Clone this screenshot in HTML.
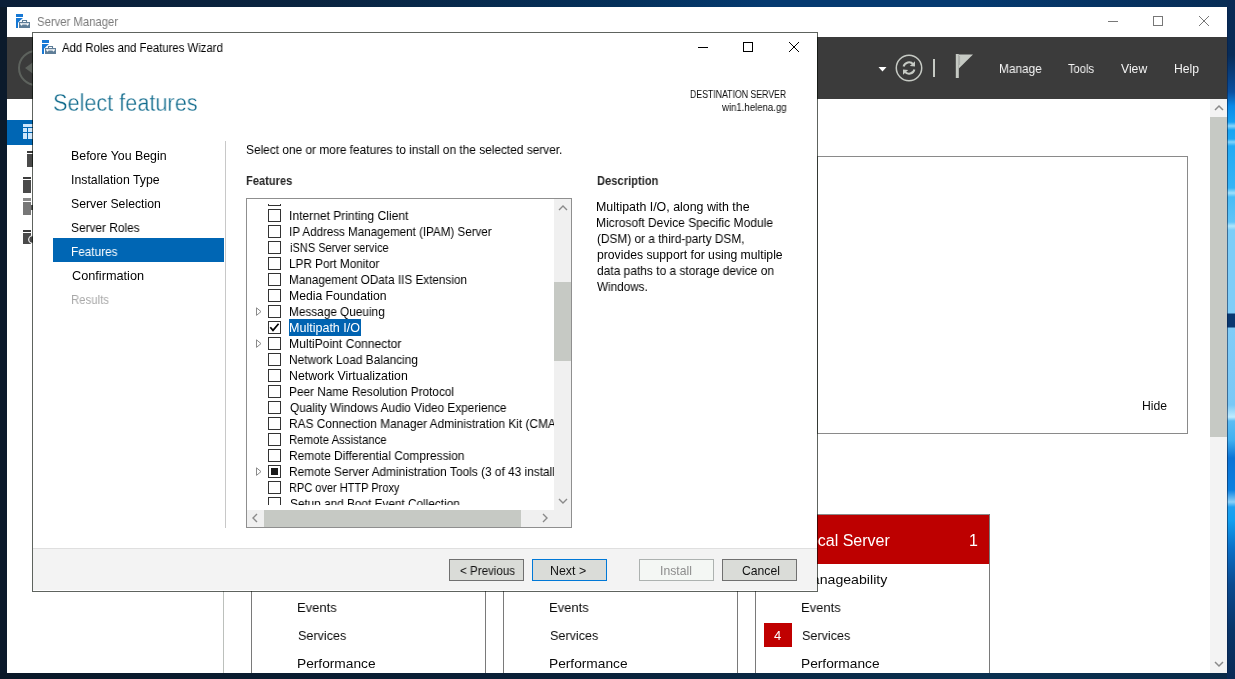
<!DOCTYPE html>
<html><head><meta charset="utf-8"><title>Server Manager - Add Roles and Features Wizard</title>
<style>
html,body{margin:0;padding:0;width:1235px;height:679px;overflow:hidden;background:#0b1a2c}
body{position:relative;font-family:"Liberation Sans",sans-serif}
.r{position:absolute}
.t{position:absolute;white-space:pre;transform-origin:0 0;will-change:transform}
</style></head><body>
<div class="r" style="left:0;top:0;width:1235px;height:679px;background:linear-gradient(90deg,#0b1a2b 0%,#0a1f35 40%,#082a4c 75%,#073058 100%)"></div>
<div class="r" style="left:0;top:0;width:1235px;height:7px;background:linear-gradient(90deg,#0a1e38 0%,#0a2440 25%,#04305a 50%,#053a70 62%,#053a70 78%,#072c55 100%)"></div>
<div class="r" style="left:0;top:673px;width:1235px;height:6px;background:linear-gradient(90deg,#0a1828 0%,#0a2038 45%,#0a3050 80%,#0a2a48 100%)"></div>
<div class="r" style="left:1227px;top:0;width:8px;height:679px;background:linear-gradient(180deg,#082a55 0px,#082c58 55px,#0a50a0 92px,#0a8ae8 106px,#14a0f2 122px,#8ad6fc 126px,#18a4f2 130px,#20a8f4 139px,#80d4fc 142px,#22aaf4 146px,#36b4f6 188px,#a0e0fc 193px,#48bcf6 197px,#60c4f8 222px,#b0e6fc 226px,#7ccdf8 230px,#80cdf8 313px,#0a3870 314px,#0a3870 327px,#80ccf8 328px,#7ac8f6 405px,#c0ecff 417px,#5cbcf4 421px,#40b0f0 440px,#0a74d6 458px,#0a80e0 490px,#8ad0f8 502px,#20a0f0 507px,#12a0f0 520px,#0a70c8 548px,#0a4a90 585px,#083468 630px,#0a2a55 679px)"></div>
<div class="r" style="left:1227px;top:7px;width:1px;height:666px;background:rgba(5,30,70,0.55)"></div>
<div class="r" style="left:7px;top:7px;width:1220px;height:666px;background:#ffffff;"></div>
<svg class="r" style="left:16px;top:14px" width="14" height="14" viewBox="0 0 14 14"><rect x="0" y="0" width="7" height="3" fill="#1778d4"/><rect x="0" y="4" width="2" height="10" fill="#1778d4"/><path d="M2 4 H7 Q4.5 6 2 8.8Z" fill="#1778d4"/><rect x="3" y="8" width="11" height="6" fill="#5f7e98"/><path d="M6.5 8.2 V6.5 H10.5 V8.2" fill="none" stroke="#5f7e98" stroke-width="1.1"/><path d="M4 9.2 H13 V10.4 H12.2 L11.8 11.5 H11 L10.6 10.4 H6.4 L6 11.5 H5.2 L4.8 10.4 H4Z" fill="#ffffff"/></svg>
<div class="t" style="left:37.00px;top:15.67px;font-size:12.2px;line-height:12.2px;color:#7a7a7a;transform:scaleX(0.9276);">Server Manager</div>
<div class="r" style="left:1108px;top:21px;width:10px;height:1px;background:#777777;"></div>
<div class="r" style="left:1153px;top:16px;width:10px;height:10px;background:transparent;box-sizing:border-box;border:1px solid #777777"></div>
<svg class="r" style="left:1199px;top:16px" width="10" height="10" viewBox="0 0 10 10"><path d="M0 0L10 10M10 0L0 10" stroke="#777777" stroke-width="1"/></svg>
<div class="r" style="left:7px;top:37px;width:1220px;height:62px;background:#3b3b3b;"></div>
<svg class="r" style="left:7px;top:40px" width="40" height="56" viewBox="0 0 40 56"><circle cx="29" cy="28" r="17" fill="none" stroke="#5d625d" stroke-width="2"/><path d="M18 28 L27 21.5 V34.5Z" fill="#5d625d"/></svg>
<svg class="r" style="left:878px;top:66px" width="9" height="6" viewBox="0 0 9 6"><path d="M0.5 1 H8.5 L4.5 5.5Z" fill="#ffffff"/></svg>
<svg class="r" style="left:894px;top:53px" width="30" height="30" viewBox="0 0 30 30"><circle cx="15" cy="15" r="12.7" fill="none" stroke="#c6cac4" stroke-width="1.5"/><path d="M9.6 13.6 A5.6 5.6 0 0 1 19.3 11.3" fill="none" stroke="#c6cac4" stroke-width="2"/><path d="M21 8.3 L21 13.6 L15.8 12.9 Z" fill="#c6cac4"/><path d="M20.4 16.4 A5.6 5.6 0 0 1 10.7 18.7" fill="none" stroke="#c6cac4" stroke-width="2"/><path d="M9 21.7 L9 16.4 L14.2 17.1 Z" fill="#c6cac4"/></svg>
<div class="r" style="left:933px;top:59px;width:2px;height:18px;background:#c6cac4;"></div>
<svg class="r" style="left:954px;top:53px" width="20" height="26" viewBox="0 0 20 26"><rect x="1.8" y="1" width="3" height="24" fill="#c6cac4"/><path d="M4.8 1.5 H19 L4.8 15.5Z" fill="#c6cac4"/><path d="M5.6 3 V12" stroke="#a9ada8" stroke-width="1"/></svg>
<div class="t" style="left:999.03px;top:62.67px;font-size:12.2px;line-height:12.2px;color:#f4f4f4;transform:scaleX(0.9708);">Manage</div>
<div class="t" style="left:1068.00px;top:62.67px;font-size:12.2px;line-height:12.2px;color:#f4f4f4;transform:scaleX(0.9169);">Tools</div>
<div class="t" style="left:1121.00px;top:62.67px;font-size:12.2px;line-height:12.2px;color:#f4f4f4;transform:scaleX(0.9851);">View</div>
<div class="t" style="left:1174.01px;top:62.67px;font-size:12.2px;line-height:12.2px;color:#f4f4f4;transform:scaleX(0.9882);">Help</div>
<div class="r" style="left:7px;top:120px;width:40px;height:25px;background:#0066b4;"></div>
<svg class="r" style="left:23px;top:124px" width="10" height="16" viewBox="0 0 10 16"><rect x="0" y="0" width="10" height="3" fill="#cfe6fb"/><rect x="0" y="4" width="4" height="4" fill="#cfe6fb"/><rect x="5" y="4" width="5" height="4" fill="#cfe6fb"/><rect x="0" y="9" width="4" height="6" fill="#cfe6fb"/><rect x="5" y="9" width="5" height="6" fill="#cfe6fb"/></svg>
<div class="r" style="left:27px;top:151px;width:6px;height:2px;background:#3c3c3c;"></div>
<div class="r" style="left:27px;top:154px;width:6px;height:13px;background:#4a4a4a;"></div>
<div class="r" style="left:23px;top:177px;width:8px;height:2px;background:#3c3c3c;"></div>
<div class="r" style="left:23px;top:180px;width:8px;height:13px;background:#4a4a4a;"></div>
<div class="r" style="left:23px;top:198px;width:8px;height:3px;background:#8a8a8a;"></div>
<div class="r" style="left:23px;top:202px;width:8px;height:13px;background:#777777;"></div>
<div class="r" style="left:31px;top:205px;width:2px;height:5px;background:#555555;"></div>
<div class="r" style="left:23px;top:230px;width:8px;height:2px;background:#3c3c3c;"></div>
<div class="r" style="left:23px;top:233px;width:8px;height:11px;background:#4a4a4a;"></div>
<svg class="r" style="left:26px;top:234px" width="8" height="11" viewBox="0 0 8 11"><circle cx="6.5" cy="5.5" r="3.8" fill="#4a4a4a" stroke="#ffffff" stroke-width="1.1"/></svg>
<div class="r" style="left:817px;top:156px;width:371px;height:278px;background:transparent;box-sizing:border-box;border:1px solid #8a8a8a"></div>
<div class="t" style="left:1142.01px;top:399.67px;font-size:12.2px;line-height:12.2px;color:#0a0a0a;transform:scaleX(0.9882);">Hide</div>
<div class="r" style="left:1210px;top:99px;width:17px;height:574px;background:#f3f3f3;"></div>
<div class="r" style="left:1210px;top:117px;width:17px;height:320px;background:#c6c9c4;"></div>
<svg class="r" style="left:1214px;top:104px" width="10" height="8" viewBox="0 0 10 8"><path d="M1 6 L5 2 L9 6" fill="none" stroke="#8a8a8a" stroke-width="1.5"/></svg>
<svg class="r" style="left:1214px;top:660px" width="10" height="8" viewBox="0 0 10 8"><path d="M1 2 L5 6 L9 2" fill="none" stroke="#8a8a8a" stroke-width="1.5"/></svg>
<div class="r" style="left:223px;top:591px;width:1px;height:82px;background:#bcc0bc;"></div>
<div class="r" style="left:251px;top:591px;width:1px;height:82px;background:#7a7a7a;"></div>
<div class="r" style="left:485px;top:591px;width:1px;height:82px;background:#7a7a7a;"></div>
<div class="r" style="left:503px;top:591px;width:1px;height:82px;background:#7a7a7a;"></div>
<div class="r" style="left:737px;top:591px;width:1px;height:82px;background:#7a7a7a;"></div>
<div class="r" style="left:755px;top:591px;width:1px;height:82px;background:#7a7a7a;"></div>
<div class="r" style="left:989px;top:591px;width:1px;height:82px;background:#7a7a7a;"></div>
<div class="r" style="left:755px;top:514px;width:235px;height:1px;background:#8a8a8a;"></div>
<div class="r" style="left:755px;top:515px;width:235px;height:49px;background:#bd0000;"></div>
<div class="r" style="left:989px;top:514px;width:1px;height:159px;background:#7a7a7a;"></div>
<div class="t" style="left:800.00px;top:533.46px;font-size:16px;line-height:16px;color:#ffffff;">Local Server</div>
<div class="t" style="left:969.00px;top:533.46px;font-size:16px;line-height:16px;color:#ffffff;">1</div>
<div class="t" style="left:800.45px;top:572.57px;font-size:13.5px;line-height:13.5px;color:#0a0a0a;transform:scaleX(1.0478);">Manageability</div>
<div class="t" style="left:297.04px;top:600.57px;font-size:13.5px;line-height:13.5px;color:#0a0a0a;transform:scaleX(0.9625);">Events</div>
<div class="t" style="left:298.00px;top:628.57px;font-size:13.5px;line-height:13.5px;color:#0a0a0a;transform:scaleX(0.9324);">Services</div>
<div class="t" style="left:296.98px;top:656.57px;font-size:13.5px;line-height:13.5px;color:#0a0a0a;transform:scaleX(1.0162);">Performance</div>
<div class="t" style="left:549.04px;top:600.57px;font-size:13.5px;line-height:13.5px;color:#0a0a0a;transform:scaleX(0.9625);">Events</div>
<div class="t" style="left:550.00px;top:628.57px;font-size:13.5px;line-height:13.5px;color:#0a0a0a;transform:scaleX(0.9324);">Services</div>
<div class="t" style="left:548.98px;top:656.57px;font-size:13.5px;line-height:13.5px;color:#0a0a0a;transform:scaleX(1.0162);">Performance</div>
<div class="t" style="left:801.04px;top:600.57px;font-size:13.5px;line-height:13.5px;color:#0a0a0a;transform:scaleX(0.9625);">Events</div>
<div class="t" style="left:802.00px;top:628.57px;font-size:13.5px;line-height:13.5px;color:#0a0a0a;transform:scaleX(0.9324);">Services</div>
<div class="t" style="left:800.98px;top:656.57px;font-size:13.5px;line-height:13.5px;color:#0a0a0a;transform:scaleX(1.0162);">Performance</div>
<div class="r" style="left:764px;top:623px;width:28px;height:24px;background:#c00000;"></div>
<div class="t" style="left:774.00px;top:629.00px;font-size:13px;line-height:13px;color:#ffffff;">4</div>
<div class="r" style="left:32px;top:32px;width:786px;height:560px;background:#ffffff;box-sizing:border-box;border:1px solid rgba(0,8,0,0.63);background-clip:padding-box"></div>
<svg class="r" style="left:42px;top:40px" width="14" height="14" viewBox="0 0 14 14"><rect x="0" y="0" width="7" height="3" fill="#1778d4"/><rect x="0" y="4" width="2" height="10" fill="#1778d4"/><path d="M2 4 H7 Q4.5 6 2 8.8Z" fill="#1778d4"/><rect x="3" y="8" width="11" height="6" fill="#5f7e98"/><path d="M6.5 8.2 V6.5 H10.5 V8.2" fill="none" stroke="#5f7e98" stroke-width="1.1"/><path d="M4 9.2 H13 V10.4 H12.2 L11.8 11.5 H11 L10.6 10.4 H6.4 L6 11.5 H5.2 L4.8 10.4 H4Z" fill="#ffffff"/></svg>
<div class="t" style="left:62.00px;top:41.59px;font-size:12.3px;line-height:12.3px;color:#000000;transform:scaleX(0.9229);">Add Roles and Features Wizard</div>
<div class="r" style="left:698px;top:47px;width:10px;height:1px;background:#000000;"></div>
<div class="r" style="left:743px;top:42px;width:10px;height:10px;background:transparent;box-sizing:border-box;border:1px solid #000000"></div>
<svg class="r" style="left:789px;top:42px" width="10" height="10" viewBox="0 0 10 10"><path d="M0 0L10 10M10 0L0 10" stroke="#000000" stroke-width="1"/></svg>
<div class="t" style="left:53.08px;top:92.11px;font-size:23.5px;line-height:23.5px;color:#0f6a8c;transform:scaleX(0.9226);-webkit-text-stroke:0.35px #ffffff;">Select features</div>
<div class="t" style="left:690.00px;top:89.53px;font-size:10px;line-height:10px;color:#0a0a0a;transform:scaleX(0.8729);">DESTINATION SERVER</div>
<div class="t" style="left:721.96px;top:102.53px;font-size:10px;line-height:10px;color:#0a0a0a;transform:scaleX(0.9599);">win1.helena.gg</div>
<div class="r" style="left:53px;top:238px;width:171px;height:24px;background:#0066b4;"></div>
<div class="t" style="left:70.99px;top:149.67px;font-size:12.2px;line-height:12.2px;color:#000000;transform:scaleX(1.0147);">Before You Begin</div>
<div class="t" style="left:70.99px;top:173.67px;font-size:12.2px;line-height:12.2px;color:#000000;transform:scaleX(1.0081);">Installation Type</div>
<div class="t" style="left:71.00px;top:197.67px;font-size:12.2px;line-height:12.2px;color:#000000;transform:scaleX(1.0041);">Server Selection</div>
<div class="t" style="left:71.00px;top:221.67px;font-size:12.2px;line-height:12.2px;color:#000000;transform:scaleX(0.9752);">Server Roles</div>
<div class="t" style="left:71.03px;top:245.67px;font-size:12.2px;line-height:12.2px;color:#ffffff;transform:scaleX(0.9659);">Features</div>
<div class="t" style="left:72.00px;top:269.67px;font-size:12.2px;line-height:12.2px;color:#000000;transform:scaleX(1.0423);">Confirmation</div>
<div class="t" style="left:71.07px;top:293.67px;font-size:12.2px;line-height:12.2px;color:#a8a8a8;transform:scaleX(0.9331);">Results</div>
<div class="r" style="left:225px;top:141px;width:1px;height:387px;background:#c8c8c8;"></div>
<div class="t" style="left:246.00px;top:143.67px;font-size:12.2px;line-height:12.2px;color:#000000;transform:scaleX(0.9750);">Select one or more features to install on the selected server.</div>
<div class="t" style="left:246.00px;top:174.67px;font-size:12.2px;line-height:12.2px;color:#262626;font-weight:bold;transform:scaleX(0.9113);">Features</div>
<div class="t" style="left:597.00px;top:174.67px;font-size:12.2px;line-height:12.2px;color:#262626;font-weight:bold;transform:scaleX(0.9159);">Description</div>
<div class="t" style="left:595.98px;top:200.67px;font-size:12.2px;line-height:12.2px;color:#000000;transform:scaleX(1.0167);">Multipath I/O, along with the</div>
<div class="t" style="left:596.01px;top:216.67px;font-size:12.2px;line-height:12.2px;color:#000000;transform:scaleX(0.9859);">Microsoft Device Specific Module</div>
<div class="t" style="left:597.00px;top:232.67px;font-size:12.2px;line-height:12.2px;color:#000000;transform:scaleX(0.9722);">(DSM) or a third-party DSM,</div>
<div class="t" style="left:597.00px;top:248.67px;font-size:12.2px;line-height:12.2px;color:#000000;">provides support for using multiple</div>
<div class="t" style="left:597.00px;top:264.67px;font-size:12.2px;line-height:12.2px;color:#000000;transform:scaleX(0.9819);">data paths to a storage device on</div>
<div class="t" style="left:597.00px;top:280.67px;font-size:12.2px;line-height:12.2px;color:#000000;transform:scaleX(0.9611);">Windows.</div>
<div class="r" style="left:246px;top:198px;width:326px;height:330px;background:#ffffff;box-sizing:border-box;border:1px solid #8f8f8f"></div>
<div class="r" style="left:247px;top:204px;width:307px;height:301px;overflow:hidden">
<div class="r" style="left:21px;top:-11px;width:13px;height:13px;box-sizing:border-box;border:1px solid #333333;background:#fff"></div>
<div class="r" style="left:21px;top:5px;width:13px;height:13px;box-sizing:border-box;border:1px solid #333333;background:#fff"></div>
<div class="t" style="left:42.01px;top:5.67px;font-size:12.2px;line-height:12.2px;color:#000000;transform:scaleX(0.9892);">Internet Printing Client</div>
<div class="r" style="left:21px;top:21px;width:13px;height:13px;box-sizing:border-box;border:1px solid #333333;background:#fff"></div>
<div class="t" style="left:42.05px;top:21.67px;font-size:12.2px;line-height:12.2px;color:#000000;transform:scaleX(0.9518);">IP Address Management (IPAM) Server</div>
<div class="r" style="left:21px;top:37px;width:13px;height:13px;box-sizing:border-box;border:1px solid #333333;background:#fff"></div>
<div class="t" style="left:43.00px;top:37.67px;font-size:12.2px;line-height:12.2px;color:#000000;transform:scaleX(0.9043);">iSNS Server service</div>
<div class="r" style="left:21px;top:53px;width:13px;height:13px;box-sizing:border-box;border:1px solid #333333;background:#fff"></div>
<div class="t" style="left:42.04px;top:53.67px;font-size:12.2px;line-height:12.2px;color:#000000;transform:scaleX(0.9642);">LPR Port Monitor</div>
<div class="r" style="left:21px;top:69px;width:13px;height:13px;box-sizing:border-box;border:1px solid #333333;background:#fff"></div>
<div class="t" style="left:42.04px;top:69.67px;font-size:12.2px;line-height:12.2px;color:#000000;transform:scaleX(0.9620);">Management OData IIS Extension</div>
<div class="r" style="left:21px;top:85px;width:13px;height:13px;box-sizing:border-box;border:1px solid #333333;background:#fff"></div>
<div class="t" style="left:42.01px;top:85.67px;font-size:12.2px;line-height:12.2px;color:#000000;transform:scaleX(0.9949);">Media Foundation</div>
<div class="r" style="left:21px;top:101px;width:13px;height:13px;box-sizing:border-box;border:1px solid #333333;background:#fff"></div>
<svg class="r" style="left:9px;top:103px" width="6" height="10" viewBox="0 0 6 10"><path d="M0.5 0.8 L5 4.6 L0.5 8.4Z" fill="none" stroke="#8a8a8a" stroke-width="1"/></svg>
<div class="t" style="left:42.03px;top:101.67px;font-size:12.2px;line-height:12.2px;color:#000000;transform:scaleX(0.9677);">Message Queuing</div>
<div class="r" style="left:21px;top:117px;width:13px;height:13px;box-sizing:border-box;border:1px solid #333333;background:#fff"></div>
<svg class="r" style="left:21px;top:117px" width="13" height="13" viewBox="0 0 13 13"><path d="M2.3 6.3 L5 9.4 L10.6 2.8" fill="none" stroke="#000" stroke-width="1.7"/></svg>
<div class="r" style="left:42px;top:115px;width:72px;height:17px;background:#0063b1"></div>
<div class="t" style="left:41.97px;top:117.67px;font-size:12.2px;line-height:12.2px;color:#ffffff;transform:scaleX(1.0279);">Multipath I/O</div>
<div class="r" style="left:21px;top:133px;width:13px;height:13px;box-sizing:border-box;border:1px solid #333333;background:#fff"></div>
<svg class="r" style="left:9px;top:135px" width="6" height="10" viewBox="0 0 6 10"><path d="M0.5 0.8 L5 4.6 L0.5 8.4Z" fill="none" stroke="#8a8a8a" stroke-width="1"/></svg>
<div class="t" style="left:42.01px;top:133.67px;font-size:12.2px;line-height:12.2px;color:#000000;transform:scaleX(0.9940);">MultiPoint Connector</div>
<div class="r" style="left:21px;top:149px;width:13px;height:13px;box-sizing:border-box;border:1px solid #333333;background:#fff"></div>
<div class="t" style="left:42.02px;top:149.67px;font-size:12.2px;line-height:12.2px;color:#000000;transform:scaleX(0.9767);">Network Load Balancing</div>
<div class="r" style="left:21px;top:165px;width:13px;height:13px;box-sizing:border-box;border:1px solid #333333;background:#fff"></div>
<div class="t" style="left:41.99px;top:165.67px;font-size:12.2px;line-height:12.2px;color:#000000;transform:scaleX(1.0098);">Network Virtualization</div>
<div class="r" style="left:21px;top:181px;width:13px;height:13px;box-sizing:border-box;border:1px solid #333333;background:#fff"></div>
<div class="t" style="left:42.03px;top:181.67px;font-size:12.2px;line-height:12.2px;color:#000000;transform:scaleX(0.9663);">Peer Name Resolution Protocol</div>
<div class="r" style="left:21px;top:197px;width:13px;height:13px;box-sizing:border-box;border:1px solid #333333;background:#fff"></div>
<div class="t" style="left:43.00px;top:197.67px;font-size:12.2px;line-height:12.2px;color:#000000;transform:scaleX(0.9695);">Quality Windows Audio Video Experience</div>
<div class="r" style="left:21px;top:213px;width:13px;height:13px;box-sizing:border-box;border:1px solid #333333;background:#fff"></div>
<div class="t" style="left:42.02px;top:213.67px;font-size:12.2px;line-height:12.2px;color:#000000;transform:scaleX(0.9750);">RAS Connection Manager Administration Kit (CMAK)</div>
<div class="r" style="left:21px;top:229px;width:13px;height:13px;box-sizing:border-box;border:1px solid #333333;background:#fff"></div>
<div class="t" style="left:42.06px;top:229.67px;font-size:12.2px;line-height:12.2px;color:#000000;transform:scaleX(0.9356);">Remote Assistance</div>
<div class="r" style="left:21px;top:245px;width:13px;height:13px;box-sizing:border-box;border:1px solid #333333;background:#fff"></div>
<div class="t" style="left:42.02px;top:245.67px;font-size:12.2px;line-height:12.2px;color:#000000;transform:scaleX(0.9786);">Remote Differential Compression</div>
<div class="r" style="left:21px;top:261px;width:13px;height:13px;box-sizing:border-box;border:1px solid #333333;background:#fff"></div>
<div class="r" style="left:24px;top:264px;width:7px;height:7px;background:#1a1a1a"></div>
<svg class="r" style="left:9px;top:263px" width="6" height="10" viewBox="0 0 6 10"><path d="M0.5 0.8 L5 4.6 L0.5 8.4Z" fill="none" stroke="#8a8a8a" stroke-width="1"/></svg>
<div class="t" style="left:42.02px;top:261.67px;font-size:12.2px;line-height:12.2px;color:#000000;transform:scaleX(0.9750);">Remote Server Administration Tools (3 of 43 installed)</div>
<div class="r" style="left:21px;top:277px;width:13px;height:13px;box-sizing:border-box;border:1px solid #333333;background:#fff"></div>
<div class="t" style="left:42.10px;top:277.67px;font-size:12.2px;line-height:12.2px;color:#000000;transform:scaleX(0.9022);">RPC over HTTP Proxy</div>
<div class="r" style="left:21px;top:293px;width:13px;height:13px;box-sizing:border-box;border:1px solid #333333;background:#fff"></div>
<div class="t" style="left:43.00px;top:293.67px;font-size:12.2px;line-height:12.2px;color:#000000;transform:scaleX(0.9674);">Setup and Boot Event Collection</div>
</div>
<div class="r" style="left:554px;top:199px;width:17px;height:311px;background:#f0f0f0;"></div>
<div class="r" style="left:554px;top:282px;width:17px;height:79px;background:#c6c9c4;"></div>
<svg class="r" style="left:558px;top:204px" width="10" height="8" viewBox="0 0 10 8"><path d="M1 6 L5 2 L9 6" fill="none" stroke="#8a8a8a" stroke-width="1.4"/></svg>
<svg class="r" style="left:558px;top:497px" width="10" height="8" viewBox="0 0 10 8"><path d="M1 2 L5 6 L9 2" fill="none" stroke="#8a8a8a" stroke-width="1.4"/></svg>
<div class="r" style="left:247px;top:510px;width:324px;height:17px;background:#f0f0f0;"></div>
<div class="r" style="left:264px;top:510px;width:257px;height:17px;background:#c6c9c4;"></div>
<svg class="r" style="left:251px;top:513px" width="8" height="10" viewBox="0 0 8 10"><path d="M6 1 L2 5 L6 9" fill="none" stroke="#8a8a8a" stroke-width="1.4"/></svg>
<svg class="r" style="left:541px;top:513px" width="8" height="10" viewBox="0 0 8 10"><path d="M2 1 L6 5 L2 9" fill="none" stroke="#8a8a8a" stroke-width="1.4"/></svg>
<div class="r" style="left:33px;top:548px;width:784px;height:1px;background:#dfdfdf;"></div>
<div class="r" style="left:33px;top:549px;width:784px;height:41px;background:#f3f3f3;"></div>
<div class="r" style="left:449px;top:559px;width:75px;height:22px;box-sizing:border-box;border:1px solid #707070;background:#dadcd8"></div>
<div class="t" style="left:459.50px;top:564.67px;font-size:12.2px;line-height:12.2px;color:#111111;transform:scaleX(0.9511);">&lt; Previous</div>
<div class="r" style="left:532px;top:559px;width:75px;height:22px;box-sizing:border-box;border:1px solid #0078d7;background:#dadcd8"></div>
<div class="t" style="left:550.48px;top:564.67px;font-size:12.2px;line-height:12.2px;color:#111111;transform:scaleX(1.0161);">Next &gt;</div>
<div class="r" style="left:639px;top:559px;width:75px;height:22px;box-sizing:border-box;border:1px solid #adb2b0;background:#f4f7f4"></div>
<div class="t" style="left:660.00px;top:564.67px;font-size:12.2px;line-height:12.2px;color:#8d8d8d;transform:scaleX(0.9957);">Install</div>
<div class="r" style="left:722px;top:559px;width:75px;height:22px;box-sizing:border-box;border:1px solid #707070;background:#dadcd8"></div>
<div class="t" style="left:741.50px;top:564.67px;font-size:12.2px;line-height:12.2px;color:#111111;transform:scaleX(0.9938);">Cancel</div>
</body></html>
